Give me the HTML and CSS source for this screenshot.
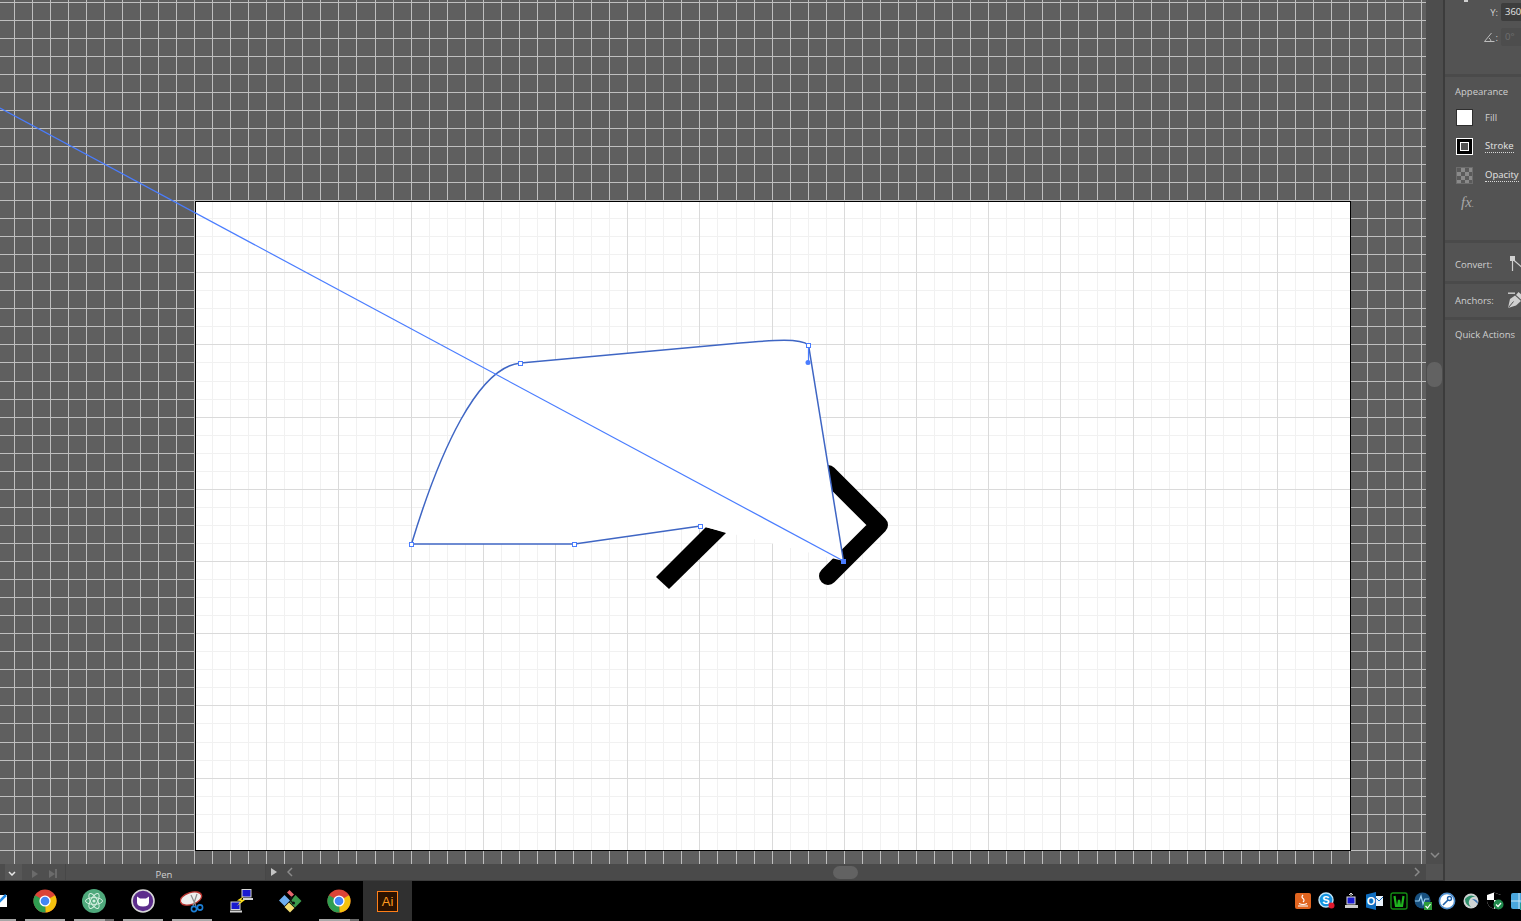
FILE: index.html
```html
<!DOCTYPE html>
<html lang="en">
<head>
    <meta charset="UTF-8">
    <title>Adobe Illustrator - Pen</title>
    <link rel="stylesheet" href="styles.css">
</head>
<body>
    <svg class="icon-defs" width="0" height="0">
        <symbol id="chrome" viewBox="0 0 24 24">
            <circle cx="12" cy="12" r="11.5" fill="#db4437"/>
            <path d="M12 12L22 6.2A11.5 11.5 0 0 1 12.5 23.5Z" fill="#f4c20d"/>
            <path d="M12 12L12.5 23.5A11.5 11.5 0 0 1 2 6.2Z" fill="#2f9e50"/>
            <circle cx="12" cy="12" r="5.6" fill="#fff"/>
            <circle cx="12" cy="12" r="4.3" fill="#4285f4"/>
        </symbol>
    </svg>

    <div class="workspace">
        <div class="document">
            <div class="document-main">
                <svg class="canvas" width="1426" height="864" viewBox="0 0 1426 864">
                    <!-- pasteboard grid -->
                    <path class="grid-paste" d="M14.5 0V864M32.5 0V864M50.5 0V864M68.5 0V864M86.5 0V864M104.5 0V864M122.5 0V864M140.5 0V864M158.5 0V864M176.5 0V864M194.5 0V864M212.5 0V864M230.5 0V864M248.5 0V864M266.5 0V864M284.5 0V864M302.5 0V864M320.5 0V864M338.5 0V864M356.5 0V864M375.5 0V864M393.5 0V864M411.5 0V864M429.5 0V864M447.5 0V864M465.5 0V864M483.5 0V864M501.5 0V864M519.5 0V864M537.5 0V864M555.5 0V864M573.5 0V864M591.5 0V864M609.5 0V864M627.5 0V864M645.5 0V864M663.5 0V864M681.5 0V864M699.5 0V864M717.5 0V864M736.5 0V864M754.5 0V864M772.5 0V864M790.5 0V864M808.5 0V864M826.5 0V864M844.5 0V864M862.5 0V864M880.5 0V864M898.5 0V864M916.5 0V864M934.5 0V864M952.5 0V864M970.5 0V864M988.5 0V864M1006.5 0V864M1024.5 0V864M1042.5 0V864M1060.5 0V864M1078.5 0V864M1097.5 0V864M1115.5 0V864M1133.5 0V864M1151.5 0V864M1169.5 0V864M1187.5 0V864M1205.5 0V864M1223.5 0V864M1241.5 0V864M1259.5 0V864M1277.5 0V864M1295.5 0V864M1313.5 0V864M1331.5 0V864M1349.5 0V864M1367.5 0V864M1385.5 0V864M1403.5 0V864M1421.5 0V864"/>
                    <path class="grid-paste" d="M0 2.5H1426M0 20.5H1426M0 38.5H1426M0 56.5H1426M0 74.5H1426M0 92.5H1426M0 110.5H1426M0 128.5H1426M0 146.5H1426M0 164.5H1426M0 182.5H1426M0 200.5H1426M0 218.5H1426M0 236.5H1426M0 254.5H1426M0 272.5H1426M0 290.5H1426M0 308.5H1426M0 326.5H1426M0 344.5H1426M0 362.5H1426M0 381.5H1426M0 399.5H1426M0 417.5H1426M0 435.5H1426M0 453.5H1426M0 471.5H1426M0 489.5H1426M0 507.5H1426M0 525.5H1426M0 543.5H1426M0 561.5H1426M0 579.5H1426M0 597.5H1426M0 615.5H1426M0 633.5H1426M0 651.5H1426M0 669.5H1426M0 687.5H1426M0 705.5H1426M0 723.5H1426M0 742.5H1426M0 760.5H1426M0 778.5H1426M0 796.5H1426M0 814.5H1426M0 832.5H1426M0 850.5H1426"/>

                    <!-- artboard -->
                    <rect class="artboard" x="195.5" y="201.5" width="1155" height="649"/>
                    <path class="grid-minor" d="M212.5 202V850M230.5 202V850M248.5 202V850M284.5 202V850M302.5 202V850M320.5 202V850M356.5 202V850M375.5 202V850M393.5 202V850M429.5 202V850M447.5 202V850M465.5 202V850M501.5 202V850M519.5 202V850M537.5 202V850M573.5 202V850M591.5 202V850M609.5 202V850M645.5 202V850M663.5 202V850M681.5 202V850M717.5 202V850M736.5 202V850M754.5 202V850M790.5 202V850M808.5 202V850M826.5 202V850M862.5 202V850M880.5 202V850M898.5 202V850M934.5 202V850M952.5 202V850M970.5 202V850M1006.5 202V850M1024.5 202V850M1042.5 202V850M1078.5 202V850M1097.5 202V850M1115.5 202V850M1151.5 202V850M1169.5 202V850M1187.5 202V850M1223.5 202V850M1241.5 202V850M1259.5 202V850M1295.5 202V850M1313.5 202V850M1331.5 202V850"/>
                    <path class="grid-minor" d="M196 218.5H1350M196 236.5H1350M196 254.5H1350M196 290.5H1350M196 308.5H1350M196 326.5H1350M196 362.5H1350M196 381.5H1350M196 399.5H1350M196 435.5H1350M196 453.5H1350M196 471.5H1350M196 507.5H1350M196 525.5H1350M196 543.5H1350M196 579.5H1350M196 597.5H1350M196 615.5H1350M196 651.5H1350M196 669.5H1350M196 687.5H1350M196 723.5H1350M196 742.5H1350M196 760.5H1350M196 796.5H1350M196 814.5H1350M196 832.5H1350"/>
                    <path class="grid-major" d="M266.5 202V850M338.5 202V850M411.5 202V850M483.5 202V850M555.5 202V850M627.5 202V850M699.5 202V850M772.5 202V850M844.5 202V850M916.5 202V850M988.5 202V850M1060.5 202V850M1133.5 202V850M1205.5 202V850M1277.5 202V850"/>
                    <path class="grid-major" d="M196 272.5H1350M196 344.5H1350M196 417.5H1350M196 489.5H1350M196 561.5H1350M196 633.5H1350M196 705.5H1350M196 778.5H1350"/>

                    <!-- earlier strokes -->
                    <polyline class="chevron" points="828,474 879,525 828,576"/>
                    <polygon class="bar-piece" points="706,527 726,533 669,589 656,577"/>

                    <!-- path being drawn -->
                    <path class="path-fill" d="M411.5 544H574.5L700.5 526L843.5 561L808.5 345C800 338 775 340 740 343L520.5 363C478 367 440 450 411.5 544Z"/>
                    <path class="path-line" d="M843.5 561L808.5 345C800 338 775 340 740 343L520.5 363C478 367 440 450 411.5 544H574.5L700.5 526"/>
                    <path class="guide" d="M0 108L843.5 561"/>
                    <path class="guide" d="M808.5 345V362"/>
                    <circle class="handle" cx="808" cy="362.5" r="2.5"/>
                    <rect class="anchor" x="409.5" y="542.5" width="4" height="4"/>
                    <rect class="anchor" x="572.5" y="542.5" width="4" height="4"/>
                    <rect class="anchor" x="698.5" y="524.5" width="4" height="4"/>
                    <rect class="anchor" x="518.5" y="361.5" width="4" height="4"/>
                    <rect class="anchor" x="806.5" y="343.5" width="4" height="4"/>
                    <rect class="anchor anchor-active" x="841.5" y="559.5" width="4" height="4"/>
                </svg>
                <div class="vscroll">
                    <div class="vscroll-thumb"></div>
                    <svg class="vscroll-down" width="10" height="6" viewBox="0 0 10 6"><path d="M1 1L5 5L9 1" fill="none" stroke="#8a8a8a" stroke-width="1.5"/></svg>
                </div>
            </div>

            <div class="statusbar">
                <div class="status-edge"></div>
                <div class="status-menu">
                    <svg width="8" height="5" viewBox="0 0 8 5"><path d="M1 1L4 4L7 1" fill="none" stroke="#e6e6e6" stroke-width="1.5"/></svg>
                </div>
                <div class="status-nav">
                    <span class="arrow arrow-dim"></span>
                    <span class="arrow arrow-dim arrow-end"></span>
                </div>
                <div class="status-tool">Pen</div>
                <div class="status-play"><span class="arrow"></span></div>
                <div class="hscroll">
                    <svg width="6" height="10" viewBox="0 0 6 10"><path d="M5 1L1 5L5 9" fill="none" stroke="#8a8a8a" stroke-width="1.5"/></svg>
                    <div class="hscroll-thumb"></div>
                    <svg width="6" height="10" viewBox="0 0 6 10"><path d="M1 1L5 5L1 9" fill="none" stroke="#8a8a8a" stroke-width="1.5"/></svg>
                </div>
                <div class="status-corner"></div>
            </div>
        </div>

        <div class="panel">
            <section class="panel-section section-transform">
                <div class="tick"></div>
                <div class="field-row">
                    <span>Y:</span>
                    <span class="field-input">360</span>
                </div>
                <div class="field-row">
                    <svg class="angle-icon" width="11" height="10" viewBox="0 0 11 10"><path d="M0.5 9.5H10.5M0.5 9.5L7.5 1M5 6Q7 7.5 7 9.5" fill="none" stroke="#bdbdbd"/></svg>
                    <span>:</span>
                    <span class="field-input field-disabled">0°</span>
                </div>
            </section>

            <section class="panel-section section-appearance">
                <div class="panel-heading">Appearance</div>
                <div class="appearance-row">
                    <span class="swatch swatch-fill"></span>
                    <span>Fill</span>
                </div>
                <div class="appearance-row">
                    <span class="swatch swatch-stroke"><i></i></span>
                    <span class="dotted">Stroke</span>
                </div>
                <div class="appearance-row">
                    <span class="swatch swatch-opacity"></span>
                    <span class="dotted">Opacity</span>
                </div>
                <div class="fx">fx<span>.</span></div>
            </section>

            <section class="panel-section section-action section-convert">
                <span class="action-label">Convert:</span>
                <svg width="16" height="16" viewBox="0 0 16 16"><rect x="0" y="0" width="5" height="5" fill="#d0d0d0"/><path d="M2.5 3V15M2.5 3L16 15" fill="none" stroke="#d0d0d0" stroke-width="1.2"/></svg>
            </section>
            <section class="panel-section section-action section-anchors">
                <span class="action-label">Anchors:</span>
                <svg class="pen-icon" width="16" height="17" viewBox="0 0 16 17"><path d="M0 1.2H7" stroke="#d0d0d0" stroke-width="1.4"/><path d="M0 16L2 7L7 3.5L13 9L8 13.5Z" fill="#d0d0d0"/><path d="M0.5 15.5L5.5 9.5" stroke="#535353"/><path d="M8 3L10.5 0L16 5L13.5 8Z" fill="#d0d0d0"/></svg>
            </section>
            <section class="section-quick">Quick Actions</section>
        </div>
    </div>

    <div class="taskbar">
        <div class="task-tile task-open">
            <svg width="22" height="22" viewBox="0 0 22 22"><rect x="6" y="5" width="16" height="12" fill="#fff"/><path d="M13 13L21 5" fill="none" stroke="#1e88e5" stroke-width="2.5"/></svg>
        </div>
        <div class="task-tile task-open">
            <svg width="24" height="24"><use href="#chrome"/></svg>
        </div>
        <div class="task-tile task-open task-stack">
            <svg width="24" height="24" viewBox="0 0 24 24">
                <circle cx="12" cy="12" r="12" fill="#4fa97c"/>
                <g fill="none" stroke="#d6f0e2" stroke-width="1">
                    <ellipse cx="12" cy="12" rx="8.5" ry="3.4"/>
                    <ellipse cx="12" cy="12" rx="8.5" ry="3.4" transform="rotate(60 12 12)"/>
                    <ellipse cx="12" cy="12" rx="8.5" ry="3.4" transform="rotate(120 12 12)"/>
                </g>
                <circle cx="12" cy="12" r="1.6" fill="#d6f0e2"/>
            </svg>
        </div>
        <div class="task-tile task-open">
            <svg width="24" height="24" viewBox="0 0 24 24">
                <circle cx="12" cy="12" r="11" fill="#5c2d8c" stroke="#d9d9d9" stroke-width="1.6"/>
                <path d="M6 7.5L9 9.5H15L18 7.5V13.5Q18 17.5 12 17.5Q6 17.5 6 13.5Z" fill="#fff"/>
            </svg>
        </div>
        <div class="task-tile task-open">
            <svg width="24" height="24" viewBox="0 0 24 24">
                <ellipse cx="11" cy="9.5" rx="11" ry="6" transform="rotate(-18 11 9.5)" fill="#eeeeee" stroke="#b8322e" stroke-width="1.4"/>
                <path d="M11 6L16 17M17 5L13 17" stroke="#8d8d8d" stroke-width="1.2"/>
                <circle cx="14" cy="20" r="2.6" fill="none" stroke="#1c7fd6" stroke-width="1.6"/>
                <circle cx="20" cy="18.5" r="2.6" fill="none" stroke="#1c7fd6" stroke-width="1.6"/>
            </svg>
        </div>
        <div class="task-tile">
            <svg width="24" height="24" viewBox="0 0 24 24">
                <rect x="13" y="0.5" width="9" height="7.5" fill="#1a1ad0" stroke="#d5d5d5"/>
                <path d="M14 9H24V11H14Z" fill="#d5d5d5"/>
                <rect x="2" y="13" width="9" height="7.5" fill="#1a1ad0" stroke="#d5d5d5"/>
                <path d="M1 21.5H13V23.5H1Z" fill="#d5d5d5"/>
                <path d="M15 7L8 11.5L12 12L8 17L16 11L12 10.5Z" fill="#ffe11a"/>
            </svg>
        </div>
        <div class="task-tile">
            <svg width="24" height="24" viewBox="0 0 24 24">
                <path d="M9 3.5L11.5 1L16 5.5L13.5 8Z" fill="#e4676e"/>
                <path d="M6.5 6L12 11.5L6.5 17L1 11.5Z" fill="#6eaef0"/>
                <path d="M17.5 6L23.5 12L17 18.5L11.5 13Z" fill="#3b9a4c"/>
                <path d="M11 13.5L16.5 19L12 23.5L6.5 18Z" fill="#f3dc70"/>
                <circle cx="13" cy="9" r="1.6" fill="#111"/>
                <circle cx="15.5" cy="14" r="1.6" fill="#111"/>
                <path d="M13 9V12.5L15.5 14" fill="none" stroke="#111" stroke-width="1.2"/>
            </svg>
        </div>
        <div class="task-tile task-open task-stack">
            <svg width="24" height="24"><use href="#chrome"/></svg>
        </div>
        <div class="task-tile task-active">
            <span class="ai-logo">Ai</span>
        </div>

        <div class="tray">
            <div class="tray-item">
                <svg width="18" height="18" viewBox="0 0 18 18"><rect width="16" height="16" x="1" y="1" rx="2" fill="#e0641f"/><path d="M5 11.5Q9 13.5 13 11.5M4 14H14M9 3Q7 5 9 6.5Q11 8 9 10" fill="none" stroke="#fff" stroke-width="1.2"/></svg>
            </div>
            <div class="tray-item">
                <svg width="18" height="18" viewBox="0 0 18 18"><circle cx="8" cy="8" r="7" fill="#1593e0" stroke="#bfe6fb" stroke-width="1.4"/><text class="tray-letter" x="8" y="12" fill="#fff">S</text><circle cx="13.5" cy="13.5" r="3" fill="#e0182d"/></svg>
            </div>
            <div class="tray-item">
                <svg width="18" height="18" viewBox="0 0 18 18"><path d="M9 1V4M9 1L7 3M9 1L11 3" fill="none" stroke="#ddd"/><rect x="5" y="5" width="8" height="7" fill="#1a1ad0" stroke="#ddd"/><rect x="3" y="13" width="13" height="3" fill="#ccc"/></svg>
            </div>
            <div class="tray-item">
                <svg width="18" height="18" viewBox="0 0 18 18"><rect x="9" y="4" width="8" height="10" fill="#eaf3fb"/><path d="M9 5L13 9L17 5" fill="none" stroke="#0f6dbf"/><path d="M0 2.5L10 0V18L0 15.5Z" fill="#0f6dbf"/><text class="tray-letter" x="5" y="12.5" fill="#fff">O</text></svg>
            </div>
            <div class="tray-item">
                <svg width="18" height="18" viewBox="0 0 18 18"><rect x="1" y="1" width="16" height="16" rx="2" fill="#000" stroke="#138a13" stroke-width="1.4"/><path d="M4.5 4L6 14H8L9 8L10 14H12L13.5 4" fill="none" stroke="#1fb51f" stroke-width="2.2"/></svg>
            </div>
            <div class="tray-item">
                <svg width="18" height="18" viewBox="0 0 18 18"><circle cx="8.5" cy="8.5" r="8" fill="#17507f"/><path d="M1 9H5L7 4L9 12L11 7H15" fill="none" stroke="#9fd4f5" stroke-width="1.2"/><rect x="10" y="10" width="8" height="8" fill="#2d9c3a"/><path d="M11.5 14L13.5 16L16.5 12" fill="none" stroke="#fff" stroke-width="1.2"/></svg>
            </div>
            <div class="tray-item">
                <svg width="18" height="18" viewBox="0 0 18 18"><circle cx="9" cy="9" r="7.6" fill="#fff" stroke="#4f8fce" stroke-width="1.6"/><circle cx="11.5" cy="6.5" r="2" fill="none" stroke="#1c5fa8" stroke-width="1.4"/><path d="M10 8L5 13" stroke="#1c5fa8" stroke-width="1.6"/></svg>
            </div>
            <div class="tray-item">
                <svg width="18" height="18" viewBox="0 0 18 18"><circle cx="9" cy="9" r="7.5" fill="#cfd4d4"/><path d="M3 7Q8 1 14 5Q9 4 7 9Q6 12 9 15Q3 13 3 7Z" fill="#2e8f6a"/><path d="M10 7Q16 7 16 12Q13 9 10 7Z" fill="#3f77b5"/></svg>
            </div>
            <div class="tray-item">
                <svg width="18" height="18" viewBox="0 0 18 18"><path d="M8 0.5L15 3V9Q15 14 8 17Q1 14 1 9V3Z" fill="#fff"/><path d="M8 0.5L15 3V8H8ZM1 8H8V17Q1 14 1 9Z" fill="#000"/><circle cx="12.5" cy="12.5" r="5" fill="#1f8a4c"/><path d="M10 12.5L12 14.5L15 11" fill="none" stroke="#fff" stroke-width="1.2"/></svg>
            </div>
            <div class="tray-item">
                <svg width="18" height="18" viewBox="0 0 18 18"><rect x="1" y="1" width="16" height="16" rx="2" fill="#4aa6dc"/><path d="M1 9H17M9 1V17" stroke="#c5e5f5"/><rect x="10" y="11" width="8" height="7" fill="#1f9a96"/></svg>
            </div>
        </div>
    </div>
</body>
</html>
```

FILE: styles.css
```css
* {
    box-sizing: border-box;
}
body {
    margin: 0;
    width: 1521px;
    height: 921px;
    overflow: hidden;
    display: flex;
    flex-direction: column;
    background: #000;
    font-family: 'Open Sans', 'Noto Sans', sans-serif;
    font-size: 9.5px;
    color: #cfcfcf;
}
.icon-defs {
    position: absolute;
}
.workspace {
    display: flex;
    height: 881px;
}

/* document window */
.document {
    width: 1445px;
    display: flex;
    flex-direction: column;
    border-right: 2px solid #3c3c3c;
}
.document-main {
    display: flex;
    height: 864px;
}
.canvas {
    display: block;
    background: #5f5f5f;
}
.grid-paste {
    fill: none;
    stroke: #bfbfbf;
    shape-rendering: crispEdges;
}
.artboard {
    fill: #fff;
    stroke: #000;
    shape-rendering: crispEdges;
}
.grid-minor {
    fill: none;
    stroke: #f1f1f1;
    shape-rendering: crispEdges;
}
.grid-major {
    fill: none;
    stroke: #dadada;
    shape-rendering: crispEdges;
}
.chevron {
    fill: #fff;
    stroke: #000;
    stroke-width: 18;
    stroke-linecap: round;
    stroke-linejoin: round;
}
.bar-piece {
    fill: #000;
}
.path-fill {
    fill: #fff;
}
.path-line {
    fill: none;
    stroke: #3f66c4;
    stroke-width: 1.5;
}
.guide {
    fill: none;
    stroke: #4a7dff;
    stroke-width: 1.2;
}
.handle {
    fill: #4a7dff;
}
.anchor {
    fill: #fff;
    stroke: #4a7dff;
    shape-rendering: crispEdges;
}
.anchor-active {
    fill: #4a7dff;
}
.vscroll {
    flex: 1;
    display: flex;
    flex-direction: column;
    align-items: center;
    background: #4d4d4d;
}
.vscroll-thumb {
    width: 15px;
    height: 25px;
    margin-top: 362px;
    background: #626262;
    border-radius: 7px;
}
.vscroll-down {
    margin-top: auto;
    margin-bottom: 6px;
}

/* status bar */
.statusbar {
    height: 17px;
    display: flex;
    background: #4a4a4a;
    border-bottom: 1px solid #3c3c3c;
}
.status-edge {
    width: 5px;
    background: #4d4d4d;
}
.status-menu {
    width: 17px;
    display: flex;
    align-items: center;
    justify-content: center;
    padding: 3px 3px 0 0;
    background: #575757;
}
.status-nav {
    width: 43px;
    display: flex;
    align-items: center;
    justify-content: center;
    gap: 11px;
    padding-top: 3px;
    background: #4f4f4f;
}
.arrow {
    display: block;
    width: 0;
    height: 0;
    border-left: 6px solid #c4c4c4;
    border-top: 4.5px solid transparent;
    border-bottom: 4.5px solid transparent;
}
.arrow-dim {
    border-left-color: #6b6b6b;
}
.arrow-end {
    position: relative;
}
.arrow-end::after {
    content: '';
    position: absolute;
    left: 0;
    top: -4.5px;
    width: 2px;
    height: 9px;
    background: #6b6b6b;
}
.status-tool {
    width: 200px;
    padding: 2px 3px 0 0;
    text-align: center;
    font-size: 9.5px;
    line-height: 17px;
    background: #4f4f4f;
    border-left: 1px solid #474747;
}
.status-play {
    width: 17px;
    display: flex;
    align-items: center;
    justify-content: center;
    background: #4a4a4a;
    border-left: 1px solid #474747;
}
.hscroll {
    flex: 1;
    display: flex;
    align-items: center;
    justify-content: space-between;
    padding: 0 6px 0 5px;
    position: relative;
}
.hscroll-thumb {
    position: absolute;
    left: 551px;
    top: 2px;
    width: 25px;
    height: 13px;
    background: #626262;
    border-radius: 7px;
}
.status-corner {
    width: 17px;
    background: #535353;
}

/* right hand panel */
.panel {
    flex: 1;
    overflow: hidden;
    background: #535353;
    padding-left: 10px;
}
.panel-section {
    margin-left: -10px;
    padding-left: 10px;
    border-bottom: 3px solid #4a4a4a;
}
.section-transform {
    height: 77px;
    padding-top: 3px;
    position: relative;
}
.tick {
    position: absolute;
    left: 19px;
    top: 0;
    width: 4px;
    height: 2px;
    background: #d0d0d0;
}
.field-row {
    display: flex;
    align-items: center;
    justify-content: flex-end;
    height: 18px;
    margin-bottom: 7px;
    margin-right: -12px;
    gap: 3px;
}
.angle-icon {
    margin-right: -2px;
}
.field-input {
    width: 32px;
    height: 18px;
    padding-left: 4px;
    line-height: 18px;
    background: #3d3d3d;
    color: #e6e6e6;
    border-radius: 2px;
}
.field-disabled {
    background: #4d4d4d;
    color: #6f6f6f;
}
.section-appearance {
    height: 166px;
    padding-top: 7px;
}
.panel-heading {
    line-height: 15px;
    margin-bottom: 4px;
}
.appearance-row {
    display: flex;
    align-items: center;
    height: 29px;
    gap: 13px;
}
.swatch {
    display: flex;
    align-items: center;
    justify-content: center;
    width: 17px;
    height: 17px;
    flex: none;
    margin-left: 1px;
    margin-right: -1px;
}
.swatch-fill {
    background: #fff;
    border: 1px solid #2e2e2e;
}
.swatch-stroke {
    background: #000;
    border: 1px solid #fff;
}
.swatch-stroke i {
    display: block;
    width: 9px;
    height: 9px;
    background: #535353;
    border: 1px solid #fff;
}
.swatch-opacity {
    border: 1px solid #6d6d6d;
    background: repeating-conic-gradient(#8a8a8a 0 25%, #5a5a5a 0 50%) 0 0 / 8px 8px;
}
.dotted {
    color: #e6e6e6;
    border-bottom: 1px dotted #d8d8d8;
    line-height: 12px;
}
.fx {
    margin: 3px 0 0 6px;
    font-family: 'Liberation Serif', serif;
    font-style: italic;
    font-size: 15px;
    line-height: 18px;
    color: #a8a8a8;
}
.fx span {
    font-size: 9px;
}
.section-action {
    display: flex;
    align-items: center;
    height: 41px;
}
.section-convert {
    padding-top: 4px;
}
.section-anchors {
    height: 36px;
}
.action-label {
    flex: none;
    width: 55px;
}
.section-action svg {
    flex: none;
}
.pen-icon {
    margin-left: -2px;
}
.section-quick {
    padding-top: 7px;
    line-height: 15px;
    white-space: nowrap;
}

/* taskbar */
.taskbar {
    flex: 1;
    display: flex;
    background: #000;
    margin-left: -29px;
    margin-right: -10px;
}
.task-tile {
    width: 49px;
    display: flex;
    align-items: center;
    justify-content: center;
    position: relative;
    flex: none;
}
.task-open::after {
    content: '';
    position: absolute;
    left: 5px;
    right: 4px;
    bottom: 0;
    height: 2px;
    background: #a6a6a6;
}
.task-stack::before {
    content: '';
    position: absolute;
    right: 4px;
    bottom: 0;
    width: 9px;
    height: 2px;
    background: #6a6a6a;
    z-index: 1;
}
.task-active {
    background: #303030;
}
.ai-logo {
    width: 21px;
    height: 21px;
    display: block;
    text-align: center;
    line-height: 19px;
    font-family: 'Liberation Sans', sans-serif;
    font-size: 13px;
    color: #ff9a1f;
    background: #2b1200;
    border: 1px solid #ff7f18;
}
.tray {
    margin-left: auto;
    display: flex;
    align-items: center;
}
.tray-item {
    width: 24px;
    height: 18px;
    display: flex;
    justify-content: center;
}
.tray-letter {
    font-family: 'Liberation Sans', sans-serif;
    font-size: 11px;
    font-weight: 700;
    text-anchor: middle;
}
```
